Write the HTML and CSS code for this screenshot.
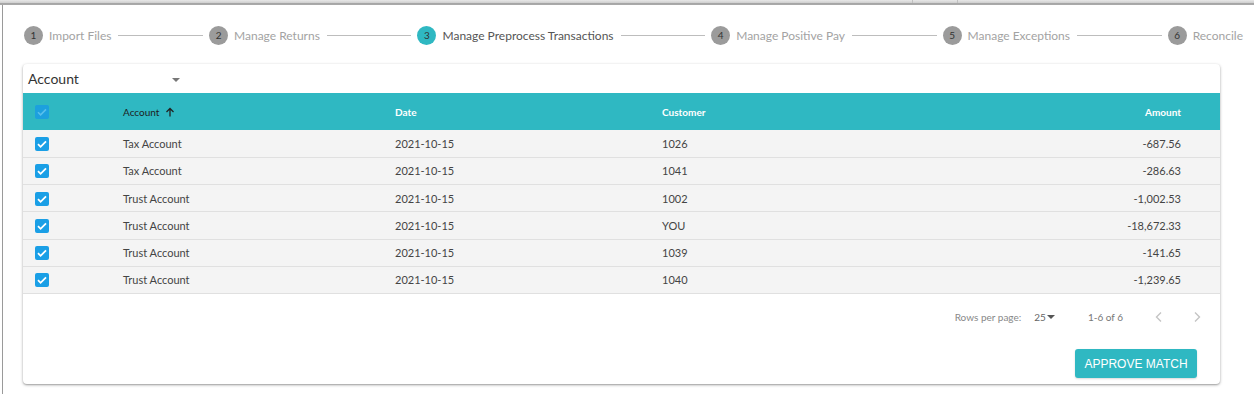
FILE: index.html
```html
<!DOCTYPE html>
<html>
<head>
<meta charset="utf-8">
<link rel="stylesheet" href="styles.css">
</head>
<body>
<div class="topbar">
  <span class="tab t1"></span><span class="tab t2"></span>
</div>
<div class="frame">
  <div class="stepper">
    <div class="step"><span class="circle">1</span><span class="label">Import Files</span></div>
    <span class="line"></span>
    <div class="step"><span class="circle">2</span><span class="label">Manage Returns</span></div>
    <span class="line"></span>
    <div class="step active"><span class="circle">3</span><span class="label">Manage Preprocess Transactions</span></div>
    <span class="line"></span>
    <div class="step"><span class="circle">4</span><span class="label">Manage Positive Pay</span></div>
    <span class="line"></span>
    <div class="step"><span class="circle">5</span><span class="label">Manage Exceptions</span></div>
    <span class="line"></span>
    <div class="step"><span class="circle">6</span><span class="label">Reconcile</span></div>
  </div>

  <div class="card">
    <div class="select">
      <span class="select-text">Account</span>
      <span class="caret"></span>
    </div>
    <table class="grid">
      <thead>
        <tr>
          <th class="c-check"><span class="cb cb-head"><svg viewBox="0 0 14 14" width="14" height="14"><path d="M3 7.2l2.6 2.6L11 4.4" fill="none" stroke="#5cc0ee" stroke-width="1.6"/></svg></span></th>
          <th class="c-acc sorted">Account <svg class="arrow" viewBox="0 0 10 10" width="10" height="10"><path d="M5 9.5V1.5M1.5 5L5 1.5 8.5 5" fill="none" stroke="#222" stroke-width="1.3"/></svg></th>
          <th class="c-date">Date</th>
          <th class="c-cust">Customer</th>
          <th class="c-amt">Amount</th>
        </tr>
      </thead>
      <tbody>
        <tr><td class="c-check"><span class="cb"><svg viewBox="0 0 14 14" width="14" height="14"><path d="M3 7.2l2.6 2.6L11 4.4" fill="none" stroke="#fff" stroke-width="1.8"/></svg></span></td><td>Tax Account</td><td>2021-10-15</td><td>1026</td><td class="c-amt">-687.56</td></tr>
        <tr><td class="c-check"><span class="cb"><svg viewBox="0 0 14 14" width="14" height="14"><path d="M3 7.2l2.6 2.6L11 4.4" fill="none" stroke="#fff" stroke-width="1.8"/></svg></span></td><td>Tax Account</td><td>2021-10-15</td><td>1041</td><td class="c-amt">-286.63</td></tr>
        <tr><td class="c-check"><span class="cb"><svg viewBox="0 0 14 14" width="14" height="14"><path d="M3 7.2l2.6 2.6L11 4.4" fill="none" stroke="#fff" stroke-width="1.8"/></svg></span></td><td>Trust Account</td><td>2021-10-15</td><td>1002</td><td class="c-amt">-1,002.53</td></tr>
        <tr><td class="c-check"><span class="cb"><svg viewBox="0 0 14 14" width="14" height="14"><path d="M3 7.2l2.6 2.6L11 4.4" fill="none" stroke="#fff" stroke-width="1.8"/></svg></span></td><td>Trust Account</td><td>2021-10-15</td><td>YOU</td><td class="c-amt">-18,672.33</td></tr>
        <tr><td class="c-check"><span class="cb"><svg viewBox="0 0 14 14" width="14" height="14"><path d="M3 7.2l2.6 2.6L11 4.4" fill="none" stroke="#fff" stroke-width="1.8"/></svg></span></td><td>Trust Account</td><td>2021-10-15</td><td>1039</td><td class="c-amt">-141.65</td></tr>
        <tr><td class="c-check"><span class="cb"><svg viewBox="0 0 14 14" width="14" height="14"><path d="M3 7.2l2.6 2.6L11 4.4" fill="none" stroke="#fff" stroke-width="1.8"/></svg></span></td><td>Trust Account</td><td>2021-10-15</td><td>1040</td><td class="c-amt">-1,239.65</td></tr>
      </tbody>
    </table>
    <div class="pager">
      <span class="rpp">Rows per page:</span>
      <span class="rpp-val">25<span class="mini-caret"></span></span>
      <span class="range">1-6 of 6</span>
      <svg class="chev" viewBox="0 0 10 12" width="10" height="12"><path d="M7 1.5L2.5 6 7 10.5" fill="none" stroke="#c4c4c4" stroke-width="1.4"/></svg>
      <svg class="chev" viewBox="0 0 10 12" width="10" height="12"><path d="M3 1.5L7.5 6 3 10.5" fill="none" stroke="#c4c4c4" stroke-width="1.4"/></svg>
    </div>
    <div class="actions">
      <button class="btn">APPROVE MATCH</button>
    </div>
  </div>
</div>
</body>
</html>
```
FILE: styles.css
```css
* { box-sizing: border-box; }
html, body { margin: 0; padding: 0; background: #fff; }
body {
  font-family: Lato, "Open Sans", sans-serif;
  color: #444;
  width: 1254px;
  height: 394px;
  overflow: hidden;
}
.topbar {
  height: 5px;
  background: linear-gradient(#e8e8e8 0, #d0d0d0 55%, #8a8a8a 80%, #c8c8c8 100%);
  position: relative;
}
.tab { position: absolute; top: 0; width: 1px; height: 3px; background: #c0c0c0; }
.t1 { left: 912px; }
.t2 { left: 957px; }
.frame {
  margin-left: 2px;
  border-left: 1px solid #9a9a9a;
  height: 389px;
  padding: 16px 10px 0 20px;
}
.stepper {
  display: flex;
  align-items: center;
  height: 28px;
  padding-left: 1px;
  margin-right: 1px;
}
.step { display: flex; align-items: center; flex: none; }
.circle {
  width: 19px; height: 19px; border-radius: 50%;
  background: #9b9b9b; color: #333;
  font-size: 10px;
  display: flex; align-items: center; justify-content: center;
}
.label { margin-left: 6px; font-size: 12px; color: #a3a3a3; }
.step.active .circle { background: #2fb8c2; }
.step.active .label { color: #555; }
.line { flex: 1; height: 1px; background: #bdbdbd; margin: 0 6px 0 7px; }

.card {
  margin-top: 15px;
  width: 1197px;
  height: 320px;
  background: #fff;
  border-radius: 4px;
  box-shadow: 0 1px 3px rgba(0,0,0,0.35), 0 1px 1px rgba(0,0,0,0.1);
  overflow: hidden;
}
.select {
  height: 29px;
  display: flex;
  align-items: center;
  padding-left: 5px;
}
.select-text { font-size: 14px; color: #333; width: 144px; }
.caret {
  width: 0; height: 0;
  border-left: 4px solid transparent; border-right: 4px solid transparent;
  border-top: 4px solid #777;
  margin-top: 2px;
}
.grid { width: 100%; border-collapse: collapse; font-size: 11px; }
.grid thead tr { background: #2fb8c2; height: 37px; }
.grid th {
  color: #fff; font-weight: 700; font-size: 10px; text-align: left; padding: 0;
}
.grid th.sorted { color: #1d1d1d; font-weight: 400; font-size: 10px; }
.arrow { vertical-align: -1px; margin-left: 3px; }
.grid tbody tr { height: 27.25px; background: #f4f4f4; border-bottom: 1px solid #e0e0e0; }
.grid td { padding: 0; color: #444; }
.c-check { width: 100px; padding-left: 12px !important; }
.c-acc { width: 272px; }
.grid td:nth-child(2) { width: 272px; }
.c-date { width: 267px; }
.c-cust { width: auto; }
.c-amt { text-align: right !important; padding-right: 39px !important; }
.cb {
  display: inline-block; width: 14px; height: 14px; border-radius: 2px;
  background: #1a9fe6; vertical-align: middle;
}
.cb svg { display: block; }
.cb-head { background: #1b9fe0; opacity: 0.95; }

.pager {
  display: flex; align-items: center; justify-content: flex-end;
  height: 46px; padding-right: 18px;
  font-size: 10px; color: #888;
}
.rpp { margin-right: 13px; }
.rpp-val { color: #666; display: flex; align-items: center; margin-right: 33px; font-size: 10px; }
.mini-caret {
  width: 0; height: 0;
  border-left: 4px solid transparent; border-right: 4px solid transparent;
  border-top: 4px solid #555; margin-left: 1px;
}
.range { margin-right: 31px; color: #777; font-size: 10px; }
.chev + .chev { margin-left: 28px; }
.actions {
  display: flex; justify-content: flex-end;
  padding-right: 23px; padding-top: 9px;
}
.btn {
  background: #2fb8c2; color: #fff; border: 0; border-radius: 3px;
  font-family: "Liberation Sans", Arial, sans-serif;
  font-size: 12px; height: 29px; width: 122px; padding: 0;
  box-shadow: 0 1px 2px rgba(0,0,0,0.15);
}
```
